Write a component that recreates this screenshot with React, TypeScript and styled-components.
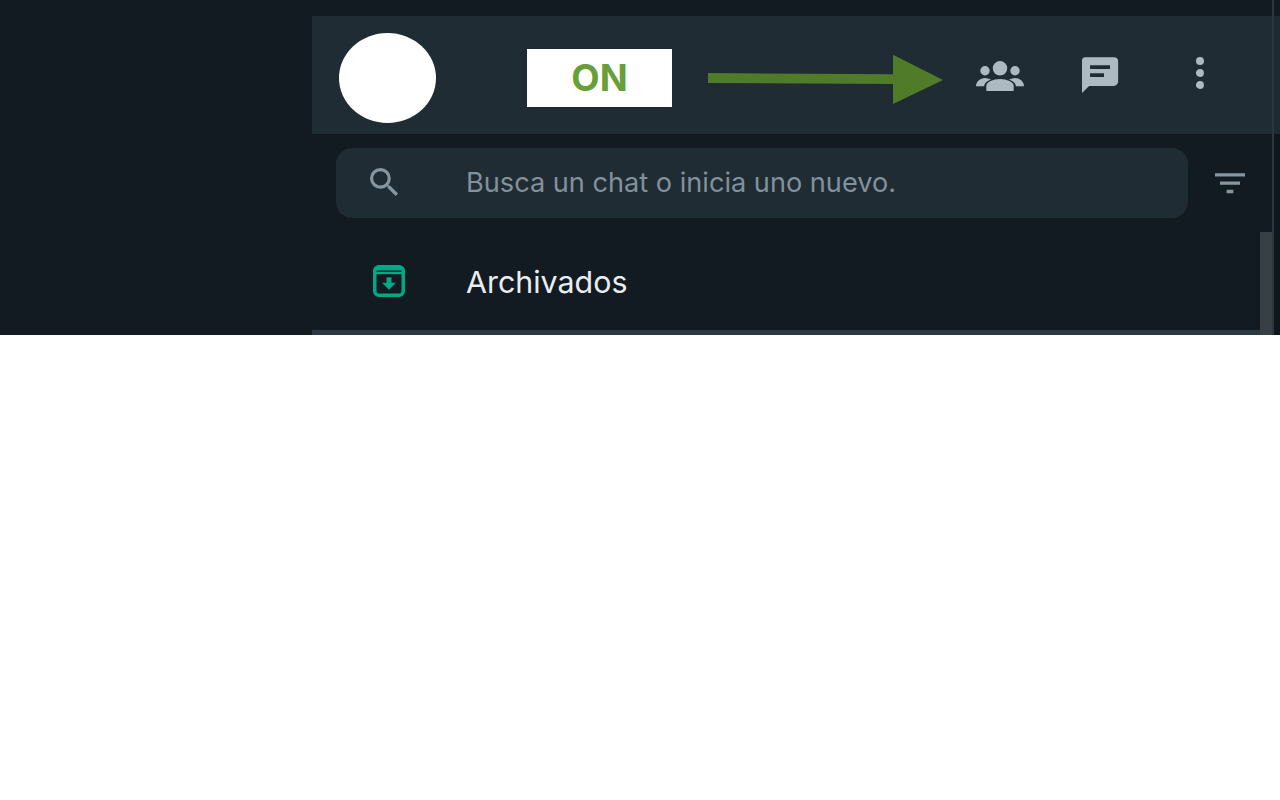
import React from "react";
import styled, { createGlobalStyle } from "styled-components";

const Global = createGlobalStyle`
  html, body { margin: 0; padding: 0; background: #ffffff; }
  body { font-family: Inter, "Liberation Sans", sans-serif; }
`;

const Page = styled.div`
  display: flex;
  width: 1280px;
  height: 335px;
  overflow: hidden;
  background: #121a22;
`;

const Gutter = styled.div`
  width: 312px;
  flex: none;
  background: #121b22;
`;

const Panel = styled.div`
  position: relative;
  width: 960px;
  flex: none;
  padding-top: 16px;
  display: flex;
  flex-direction: column;
`;

const RightEdge = styled.div`
  flex: 1;
  display: flex;
  flex-direction: column;
  border-left: 2px solid #2b373e;
  background: #0f161c;
`;

const EdgeCap = styled.div`
  height: 16px;
  flex: none;
  background: #121a22;
`;

const EdgeBand = styled.div`
  height: 118px;
  flex: none;
  background: #1f2b32;
`;

const Header = styled.header`
  height: 118px;
  flex: none;
  background: #202c33;
  display: flex;
  align-items: center;
  padding: 0 48px 0 27px;
`;

const Avatar = styled.div`
  width: 97px;
  height: 90px;
  margin-top: 6px;
  border-radius: 50%;
  background: #ffffff;
  flex: none;
`;

const Badge = styled.div`
  width: 145px;
  height: 58px;
  margin: 6px 0 0 91px;
  padding-bottom: 1px;
  box-sizing: border-box;
  background: #ffffff;
  color: #689f38;
  font-size: 36.8px;
  font-weight: 700;
  display: flex;
  align-items: center;
  justify-content: center;
  flex: none;
`;

const Arrow = styled.svg`
  width: 236px;
  height: 52px;
  margin: 10px 0 0 36px;
  flex: none;
  display: block;
`;

const Actions = styled.div`
  margin-left: auto;
  display: flex;
  gap: 52px;
  color: #aebac1;
`;

const Icon = styled.svg<{ $size: number }>`
  width: ${(p) => p.$size}px;
  height: ${(p) => p.$size}px;
  flex: none;
  display: block;
  fill: currentColor;
`;

const SearchIcon = styled(Icon)`
  margin-top: -2px;
`;

const SearchRow = styled.div`
  display: flex;
  align-items: center;
  padding: 14px 22px 0 24px;
  color: #8696a0;
`;

const SearchBox = styled.div`
  width: 852px;
  height: 70px;
  flex: none;
  border-radius: 16px;
  background: #202c33;
  display: flex;
  align-items: center;
  padding-left: 24px;
  box-sizing: border-box;
`;

const Placeholder = styled.span`
  margin: -2px 0 0 58px;
  font-size: 27.15px;
  color: #82919b;
  white-space: nowrap;
`;

const FilterSlot = styled.div`
  margin-left: 22px;
`;

const ArchivedRow = styled.div`
  height: 98px;
  margin-top: 14px;
  flex: none;
  display: flex;
  align-items: center;
  padding-left: 61px;
  box-sizing: border-box;
`;

const ArchiveIcon = styled.svg`
  width: 32px;
  height: 32px;
  flex: none;
  display: block;
  color: #00a884;
`;

const ArchivedLabel = styled.span`
  margin: 1px 0 0 61px;
  font-size: 30.4px;
  font-weight: 400;
  color: #e9edef;
  white-space: nowrap;
`;

const Divider = styled.div`
  height: 5px;
  flex: none;
  background: #2a3942;
`;

const Scrollbar = styled.div`
  position: absolute;
  top: 232px;
  right: 0;
  bottom: 0;
  width: 12px;
  background: #374045;
`;

export default function App() {
  return (
    <>
      <Global />
      <Page>
        <Gutter />
        <Panel>
          <Header>
            <Avatar />
            <Badge>ON</Badge>
            <Arrow viewBox="0 0 236 52" aria-hidden="true">
              <path d="M0 19 L185 20.3 L185 0.7 L235 26 L185 50 L185 30 L0 29 Z" fill="#507c2a" />
            </Arrow>
            <Actions>
              <Icon $size={48} viewBox="0 2 48 48" aria-hidden="true">
                <circle cx="24" cy="19.3" r="7.2" />
                <circle cx="9" cy="21.7" r="4.7" />
                <circle cx="39" cy="21.7" r="4.7" />
                <path d="M10.3 42V37C10.3 33 17 30 24 30C31 30 37.7 33 37.7 37V42Z" />
                <path d="M0 37.3C0 33 4 29 9 29C11 29 13 29.5 15 30.5C11 32 8.5 34 8 37.3Z" />
                <path d="M48 37.3C48 33 44 29 39 29C37 29 35 29.5 33 30.5C37 32 39.5 34 40 37.3Z" />
              </Icon>
              <Icon $size={48} viewBox="0 0 24 24" aria-hidden="true">
                <path d="M19.005 3.175H4.674C3.642 3.175 3 3.789 3 4.821V21.02l3.544-3.514h12.461c1.033 0 2.064-1.06 2.064-2.093V4.821c-.001-1.032-1.032-1.646-2.064-1.646zm-4.989 9.869H7.041V11.1h6.975v1.944zm3-4H7.041V7.1h9.975v1.944z" />
              </Icon>
              <Icon $size={48} viewBox="0 0 24 24" aria-hidden="true">
                <path d="M12 7a2 2 0 1 0-.001-4.001A2 2 0 0 0 12 7zm0 2a2 2 0 1 0-.001 3.999A2 2 0 0 0 12 9zm0 6a2 2 0 1 0-.001 3.999A2 2 0 0 0 12 15z" />
              </Icon>
            </Actions>
          </Header>
          <SearchRow>
            <SearchBox>
              <SearchIcon $size={48} viewBox="0 0 24 24" aria-hidden="true">
                <path d="M15.009 13.805h-.636l-.22-.219a5.184 5.184 0 0 0 1.256-3.386 5.207 5.207 0 1 0-5.207 5.208 5.183 5.183 0 0 0 3.385-1.255l.221.22v.635l4.004 3.999 1.194-1.195-3.997-4.007zm-4.808 0a3.605 3.605 0 1 1 0-7.21 3.605 3.605 0 0 1 0 7.21z" />
              </SearchIcon>
              <Placeholder>Busca un chat o inicia uno nuevo.</Placeholder>
            </SearchBox>
            <FilterSlot>
              <Icon $size={40} viewBox="0 0 24 24" aria-hidden="true">
                <path d="M10 18.1h4v-2h-4v2zm-7-12v2h18v-2H3zm3 7h12v-2H6v2z" />
              </Icon>
            </FilterSlot>
          </SearchRow>
          <ArchivedRow>
            <ArchiveIcon viewBox="0 0 32 32" aria-hidden="true">
              <rect x="1.75" y="1.75" width="28.5" height="28.5" rx="4" fill="none" stroke="currentColor" strokeWidth="3.5" />
              <rect x="2" y="3" width="28" height="2.5" fill="currentColor" />
              <rect x="2" y="6.8" width="28" height="2.4" fill="currentColor" />
              <path d="M13.5 12.3h5v5.5h4.5L16 24.7l-7-6.9h4.5z" fill="currentColor" />
            </ArchiveIcon>
            <ArchivedLabel>Archivados</ArchivedLabel>
          </ArchivedRow>
          <Divider />
          <Scrollbar />
        </Panel>
        <RightEdge>
          <EdgeCap />
          <EdgeBand />
        </RightEdge>
      </Page>
    </>
  );
}
